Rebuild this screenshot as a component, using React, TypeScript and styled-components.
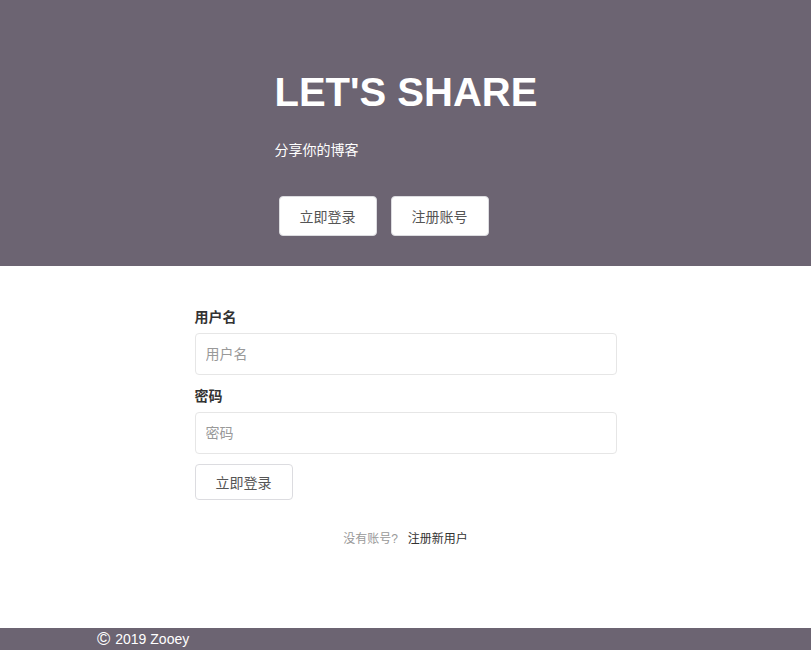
import React from "react";
import styled, { createGlobalStyle } from "styled-components";

const Global = createGlobalStyle`
  html, body { margin: 0; padding: 0; }
  body {
    font-family: "Liberation Sans", "Noto Sans CJK SC", sans-serif;
    color: #333;
    background: #fff;
  }
  * { box-sizing: border-box; }
`;

const Page = styled.div`
  min-height: 100vh;
  display: flex;
  flex-direction: column;
`;

const Hero = styled.header`
  background: #6c6472;
  height: 266px;
  padding-top: 69px;
`;

const HeroInner = styled.div`
  width: 262px;
  margin: 0 auto;
  display: flex;
  flex-direction: column;
`;

const Title = styled.h1`
  margin: 0;
  font-family: "Liberation Sans", Arial, sans-serif;
  font-size: 40px;
  line-height: 46px;
  font-weight: 700;
  color: #fff;
  white-space: nowrap;
`;

const Subtitle = styled.p`
  margin: 25px 0 0;
  font-size: 14px;
  line-height: 20px;
  color: #fff;
`;

const HeroActions = styled.div`
  margin: 36px 0 0 4px;
  display: flex;
  gap: 14px;
`;

const Button = styled.button<{ $h: number }>`
  width: 98px;
  height: ${(p) => p.$h}px;
  padding: 0;
  background: #fff;
  border: 1px solid #dcdce0;
  border-radius: 4px;
  color: #555;
  font-family: "Liberation Sans", "Noto Sans CJK SC", sans-serif;
  font-size: 14px;
  cursor: pointer;
`;

const Main = styled.main`
  flex: 1;
  padding-top: 41px;
`;

const Form = styled.form`
  width: 422px;
  margin: 0 auto;
  display: flex;
  flex-direction: column;
`;

const Label = styled.label<{ $top: number }>`
  margin-top: ${(p) => p.$top}px;
  font-size: 14px;
  line-height: 20px;
  font-weight: 700;
  color: #333;
`;

const Input = styled.input`
  margin-top: 6px;
  height: 42px;
  width: 100%;
  padding: 0 10px;
  border: 1px solid #e6e6e6;
  border-radius: 4px;
  font-family: "Liberation Sans", "Noto Sans CJK SC", sans-serif;
  font-size: 14px;
  color: #333;
  outline: none;
  &::placeholder { color: #999; }
`;

const SubmitRow = styled.div`
  margin-top: 10px;
`;

const RegisterLine = styled.p`
  margin: 31px 0 0;
  text-align: center;
  font-size: 12px;
  line-height: 17px;
  color: #999;
`;

const RegisterLink = styled.a`
  color: #333;
  text-decoration: none;
  margin-left: 10px;
`;

const Footer = styled.footer`
  background: #6c6472;
  height: 22px;
`;

const FooterInner = styled.div`
  width: 617px;
  margin: 0 auto;
  color: #fff;
  font-size: 14px;
  line-height: 22px;
  display: flex;
  align-items: center;
  gap: 5px;
`;

const Copy = styled.span`
  font-size: 18px;
  line-height: 22px;
`;

export default function App() {
  return (
    <Page>
      <Global />
      <Hero>
        <HeroInner>
          <Title>LET'S SHARE</Title>
          <Subtitle>分享你的博客</Subtitle>
          <HeroActions>
            <Button $h={40} type="button">立即登录</Button>
            <Button $h={40} type="button">注册账号</Button>
          </HeroActions>
        </HeroInner>
      </Hero>
      <Main>
        <Form onSubmit={(e) => e.preventDefault()}>
          <Label $top={0}>用户名</Label>
          <Input placeholder="用户名" />
          <Label $top={11}>密码</Label>
          <Input type="password" placeholder="密码" />
          <SubmitRow>
            <Button $h={36} type="submit">立即登录</Button>
          </SubmitRow>
          <RegisterLine>
            没有账号?
            <RegisterLink href="#">注册新用户</RegisterLink>
          </RegisterLine>
        </Form>
      </Main>
      <Footer>
        <FooterInner>
          <Copy>©</Copy>
          <span>2019 Zooey</span>
        </FooterInner>
      </Footer>
    </Page>
  );
}
